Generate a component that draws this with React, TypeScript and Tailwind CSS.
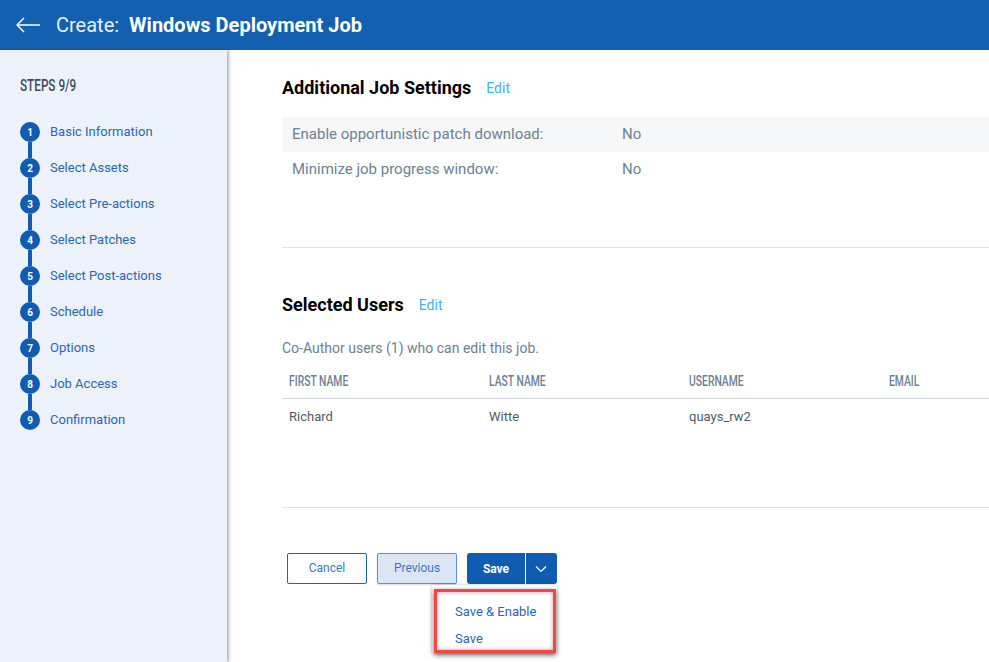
const steps = [
  "Basic Information",
  "Select Assets",
  "Select Pre-actions",
  "Select Patches",
  "Select Post-actions",
  "Schedule",
  "Options",
  "Job Access",
  "Confirmation",
];

// no condensed face installed, so squeeze Roboto for the narrow caps labels
function Narrow({ children }: { children: string }) {
  return <span className="inline-block origin-left scale-x-[0.69] font-medium whitespace-nowrap">{children}</span>;
}

function Sidebar() {
  return (
    <aside className="relative z-10 w-[227px] shrink-0 bg-[#edf2fa] pl-5 pt-[25px] shadow-[2px_0_3px_rgba(0,0,0,0.3)]">
      <p className="text-[17px] leading-[20px] text-[#3d4b57]">
        <Narrow>STEPS 9/9</Narrow>
      </p>
      <ol className="mt-[27px]">
        {steps.map((s, idx) => (
          <li key={s} className="flex h-9 items-start gap-[10px]">
            <div className="flex h-9 w-5 flex-col items-center">
              <span className="grid size-5 shrink-0 place-items-center rounded-full bg-[#0f5cb0] text-[10px] font-bold text-white">
                {idx + 1}
              </span>
              {idx < steps.length - 1 && <span className="h-4 w-1 bg-[#0f5cb0]" />}
            </div>
            <span className="text-[13px] leading-[20px] text-[#2a66b3]">{s}</span>
          </li>
        ))}
      </ol>
    </aside>
  );
}

function SectionTitle({ title }: { title: string }) {
  return (
    <div className="flex items-center gap-[15px]">
      <h2 className="text-[18px] leading-6 font-bold text-black">{title}</h2>
      <a className="text-[14px] leading-6 text-[#3fb1f5]">Edit</a>
    </div>
  );
}

function SettingRow({ label, value, shaded }: { label: string; value: string; shaded?: boolean }) {
  return (
    <div className={`flex h-[35px] items-center pl-[10px] text-[15px] text-[#6d8191] ${shaded ? "bg-[#f6f7f9]" : ""}`}>
      <span className="w-[330px]">{label}</span>
      <span>{value}</span>
    </div>
  );
}

function ActionButtons() {
  return (
    <div className="relative mt-[45px] ml-[5px] flex gap-[10px] text-[12px]">
      <button className="h-[31px] w-20 rounded-[2px] border border-[#1a67b5] bg-white pb-[2px] text-[#3a78bd]">Cancel</button>
      <button className="h-[31px] w-20 rounded-[2px] border border-[#5f92cc] bg-[#dbe6f4] pb-[2px] text-[#3a78bd] shadow-[0_1px_2px_rgba(0,0,0,0.15)]">Previous</button>
      <div className="flex h-[31px] w-[90px] rounded-[3px] bg-[#0f5cb0] text-white">
        <span className="grid w-[59px] place-items-center border-r border-white font-bold">Save</span>
        <span className="grid flex-1 place-items-center pr-px">
          <svg width="12" height="8" viewBox="0 0 12 8" fill="none" stroke="white" strokeWidth="1.2">
            <path d="M1 1.5l5 5 5-5" />
          </svg>
        </span>
      </div>
      {/* dropdown with the red callout drawn over it */}
      <div className="absolute top-[32px] left-[145px] h-[68px] w-[125px] bg-white pt-1 pl-[2px] shadow-[0_0_3px_rgba(0,0,0,0.25)]">
        <div className="h-[64px] w-[122px] border-[3px] border-[#f54545] bg-white pt-[6px] pl-[18px] text-[13px] leading-[27px] text-[#2a66b3] shadow-[0_2px_5px_rgba(0,0,0,0.6),inset_0_0_4px_rgba(0,0,0,0.35)]">
          <p>Save &amp; Enable</p>
          <p>Save</p>
        </div>
      </div>
    </div>
  );
}

export default function App() {
  return (
    <div className="flex h-[662px] w-[989px] flex-col overflow-hidden bg-white font-['Roboto',sans-serif]">
      <header className="flex h-[50px] shrink-0 items-center bg-[#1360b0] pl-4 text-white">
        <svg width="24" height="16" viewBox="0 0 24 16" fill="none" stroke="white" strokeWidth="1.5">
          <path d="M24 8H1M8 1L1 8l7 7" />
        </svg>
        <span className="ml-4 text-[20px] text-[#e8eff8]">Create:</span>
        <span className="ml-[10px] text-[20px] font-bold">Windows Deployment Job</span>
      </header>
      <div className="flex min-h-0 flex-1">
        <Sidebar />
        <main className="min-w-0 flex-1 pt-[26px] pl-[55px]">
          <SectionTitle title="Additional Job Settings" />
          <div className="mt-[17px]">
            <SettingRow shaded label="Enable opportunistic patch download:" value="No" />
            <SettingRow label="Minimize job progress window:" value="No" />
          </div>
          <div className="mt-[60px] h-px bg-[#e2e4e7]" />
          <div className="mt-[45px]">
            <SectionTitle title="Selected Users" />
          </div>
          <p className="mt-[21px] text-[14px] leading-5 text-[#6d8191]">Co-Author users (1) who can edit this job.</p>
          <div className="mt-[13px] grid h-5 grid-cols-[200px_200px_200px_1fr] pl-[7px] text-[15px] leading-5 text-[#6d8191]">
            <Narrow>FIRST NAME</Narrow>
            <Narrow>LAST NAME</Narrow>
            <Narrow>USERNAME</Narrow>
            <Narrow>EMAIL</Narrow>
          </div>
          <div className="mt-[7px] h-px bg-[#ced6dd]" />
          <div className="mt-2 grid h-5 grid-cols-[200px_200px_200px_1fr] pl-[7px] text-[13px] leading-5 text-[#4d5a65]">
            <span>Richard</span>
            <span>Witte</span>
            <span>quays_rw2</span>
            <span />
          </div>
          <div className="mt-20 h-px bg-[#e2e4e7]" />
          <ActionButtons />
        </main>
      </div>
    </div>
  );
}
